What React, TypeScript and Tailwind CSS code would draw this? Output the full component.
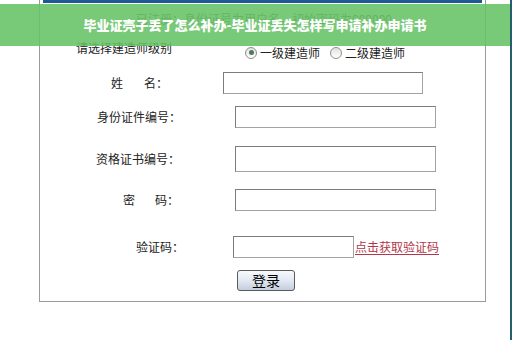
const fieldFont = { fontFamily: '"Noto Sans CJK SC", "Noto Sans", sans-serif' }

const Field = ({ className }: { className: string }) => (
    <div className={`h-[22px] bg-white border border-[#a3a3a3] border-t-[#7c7c7c] border-l-[#7c7c7c] ${className}`}></div>
)

const Radio = ({ checked }: { checked?: boolean }) => (
    <span className="w-[12px] h-[12px] rounded-full border border-[#8f8f8f] bg-gradient-to-b from-[#e2e2e2] to-white flex items-center justify-center">
        {checked && <span className="w-[5px] h-[5px] rounded-full bg-[#4f7a5c]"></span>}
    </span>
)

export default function App() {
    return (
        <div className="relative w-[512px] h-[340px] bg-white overflow-hidden text-[#222]" style={fieldFont}>
            {/* Form box */}
            <div className="ml-[39px] w-[447px] h-[302px] border border-t-0 border-[#9a9a9a]">
                <div className="mx-[3px] h-[3px] bg-[#1d5a92]"></div>

                {/* notice, mostly hidden under the banner */}
                <div className="mt-[9px] pl-[96px] h-[14px] text-[12px] leading-[14px] text-[#555]">
                    已注册：身份证号为用户名，初始密码为000000
                </div>

                {/* level select */}
                <div className="mt-[10px] flex h-[24px] text-[12px] leading-[14px]">
                    <span className="pl-[36px] pt-[5px]">请选择建造师级别</span>
                    <div className="ml-[73px] pt-[9px] flex items-center gap-[3px]">
                        <Radio checked />
                        <span>一级建造师</span>
                        <span className="ml-[7px]"><Radio /></span>
                        <span>二级建造师</span>
                    </div>
                </div>

                {/* name */}
                <div className="mt-[12px] flex items-center text-[12px]">
                    <span className="ml-[71px]">姓</span>
                    <span className="ml-[21px]">名：</span>
                    <Field className="ml-[55px] w-[200px]" />
                </div>

                {/* id number */}
                <div className="mt-[12px] flex items-center text-[12px]">
                    <span className="ml-[57px] w-[138px]">身份证件编号：</span>
                    <Field className="w-[201px]" />
                </div>

                {/* certificate number */}
                <div className="mt-[18px] flex items-center text-[12px]">
                    <span className="ml-[56px] w-[139px]">资格证书编号：</span>
                    <Field className="w-[201px] h-[26px]" />
                </div>

                {/* password */}
                <div className="mt-[17px] flex items-center text-[12px]">
                    <span className="ml-[83px]">密</span>
                    <span className="ml-[20px]">码：</span>
                    <Field className="ml-[56px] w-[201px]" />
                </div>

                {/* captcha */}
                <div className="mt-[25px] flex items-center text-[12px]">
                    <span className="ml-[96px] w-[97px]">验证码：</span>
                    <Field className="w-[121px]" />
                    <a className="ml-[1px] text-[#b3364a] underline underline-offset-2">点击获取验证码</a>
                </div>

                <div className="mt-[9px] pl-[197px]">
                    <button className="w-[58px] h-[21px] rounded-[3px] border border-[#5a5a5a] bg-gradient-to-b from-[#f7f9fc] via-[#e3e9f2] to-[#c3cedd] text-[14px] leading-[19px] text-black">
                        登录
                    </button>
                </div>
            </div>

            {/* title banner */}
            <div className="absolute top-[4px] left-0 w-[510px] h-[42px] bg-[rgba(101,194,101,0.88)] flex items-center justify-center text-white text-[13px] font-black">
                毕业证壳子丢了怎么补办-毕业证丢失怎样写申请补办申请书
            </div>

            <div className="absolute top-0 right-0 w-[2px] h-[340px] bg-[#235f6c]"></div>
        </div>
    )
}
